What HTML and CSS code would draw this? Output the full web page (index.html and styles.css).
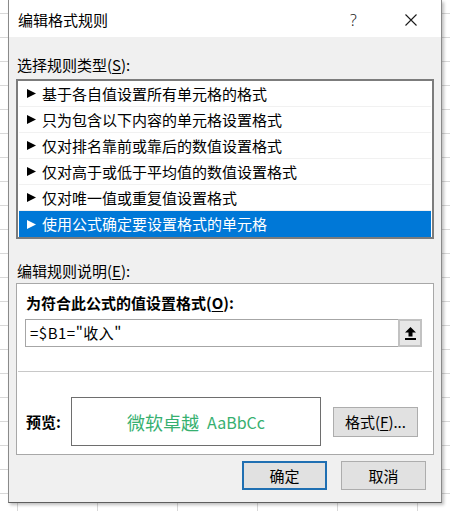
FILE: index.html
```html
<!DOCTYPE html>
<html lang="zh-CN">
<head>
<meta charset="utf-8">
<title>编辑格式规则</title>
<link rel="stylesheet" href="styles.css">
</head>
<body>
<div class="dialog">
  <div class="titlebar">
    <span class="title">编辑格式规则</span>
    <span class="help">?</span>
    <span class="close">
      <svg width="12" height="12" viewBox="0 0 12 12"><path d="M0.5 0.5 L11.5 11.5 M11.5 0.5 L0.5 11.5" stroke="#1a1a1a" stroke-width="1.1" fill="none"/></svg>
    </span>
  </div>
  <div class="body">
    <div class="label">选择规则类型(<u>S</u>):</div>
    <ul class="list">
      <li class="row"><svg class="tri" width="9" height="9" viewBox="0 0 9 9"><polygon points="0,0 9,4.5 0,9" fill="currentColor"/></svg><span>基于各自值设置所有单元格的格式</span></li>
      <li class="row"><svg class="tri" width="9" height="9" viewBox="0 0 9 9"><polygon points="0,0 9,4.5 0,9" fill="currentColor"/></svg><span>只为包含以下内容的单元格设置格式</span></li>
      <li class="row"><svg class="tri" width="9" height="9" viewBox="0 0 9 9"><polygon points="0,0 9,4.5 0,9" fill="currentColor"/></svg><span>仅对排名靠前或靠后的数值设置格式</span></li>
      <li class="row"><svg class="tri" width="9" height="9" viewBox="0 0 9 9"><polygon points="0,0 9,4.5 0,9" fill="currentColor"/></svg><span>仅对高于或低于平均值的数值设置格式</span></li>
      <li class="row"><svg class="tri" width="9" height="9" viewBox="0 0 9 9"><polygon points="0,0 9,4.5 0,9" fill="currentColor"/></svg><span>仅对唯一值或重复值设置格式</span></li>
      <li class="row selected"><svg class="tri" width="9" height="9" viewBox="0 0 9 9"><polygon points="0,0 9,4.5 0,9" fill="currentColor"/></svg><span>使用公式确定要设置格式的单元格</span></li>
    </ul>
    <div class="label label2">编辑规则说明(<u>E</u>):</div>
    <div class="panel">
      <div class="bold-label">为符合此公式的值设置格式(<u>O</u>):</div>
      <div class="input">
        <span class="formula">=$B1="收入"</span>
        <span class="collapse">
          <svg width="11" height="13" viewBox="0 0 11 13"><path d="M5.5 0 L11 5.5 L7.5 5.5 L7.5 9.5 L3.5 9.5 L3.5 5.5 L0 5.5 Z" fill="#000"/><rect x="0" y="11" width="11" height="2" fill="#000"/></svg>
        </span>
      </div>
      <div class="sep"></div>
      <div class="preview-row">
        <span class="bold-label preview-label">预览:</span>
        <div class="preview"><span class="zh">微软卓越</span><span class="en">AaBbCc</span></div>
        <span class="btn fmt">格式(<u>F</u>)...</span>
      </div>
    </div>
    <div class="buttons">
      <span class="btn ok">确定</span>
      <span class="btn">取消</span>
    </div>
  </div>
</div>
</body>
</html>
```
FILE: styles.css
```css
html, body {
  margin: 0;
  padding: 0;
}
body {
  width: 450px;
  height: 511px;
  overflow: hidden;
  background-color: #fff;
  background-image:
    linear-gradient(#d8d8d8 1px, transparent 1px),
    linear-gradient(90deg, #d8d8d8 1px, transparent 1px);
  background-size: 100% 24px, 80px 100%;
  background-position: 0 13px, 17px 0;
  font-family: "Noto Sans CJK SC", "Noto Sans", sans-serif;
  font-size: 15px;
  color: #000;
}
.dialog {
  margin-left: 8px;
  width: 434px;
  height: 503px;
  box-sizing: border-box;
  border: 1px solid #8a8a8a;
  border-top: none;
  border-bottom-color: #5e5e5e;
  background: #f0f0f0;
  display: flex;
  flex-direction: column;
  box-shadow: 2px 2px 3px rgba(0, 0, 0, 0.25);
}
.titlebar {
  height: 37px;
  box-sizing: border-box;
  padding: 2px 18px 0 9px;
  background: #fff;
  display: flex;
  align-items: center;
}
.title {
  line-height: 20px;
}
.help {
  margin-left: auto;
  width: 21px;
  text-align: center;
  font-family: "Noto Sans", sans-serif;
  font-weight: 300;
  font-size: 16px;
  line-height: 20px;
  color: #222;
}
.close {
  margin-left: 35px;
  width: 24px;
  height: 20px;
  display: flex;
  align-items: center;
  justify-content: center;
}
.body {
  padding: 18px 7px 0 7px;
  display: flex;
  flex-direction: column;
}
.label {
  padding-left: 1px;
  height: 20px;
  line-height: 20px;
  margin-bottom: 4px;
}
.label2 {
  margin-top: 22px;
  margin-bottom: 2px;
}
u {
  text-decoration-thickness: 1px;
  text-underline-offset: 2px;
}
.list {
  list-style: none;
  margin: 0;
  padding: 0 1px;
  height: 160px;
  box-sizing: border-box;
  border: 2px solid #7c7c7c;
  background: #fff;
}
.row {
  height: 26px;
  box-sizing: border-box;
  border-bottom: 1px solid #f1f1f1;
  display: flex;
  align-items: center;
  padding-left: 8px;
  gap: 6px;
  line-height: 20px;
}
.row:last-child {
  border-bottom: none;
}
.tri {
  flex: none;
  color: #000;
}
.selected {
  background: #0078d7;
  color: #fff;
}
.selected .tri {
  color: #fff;
}
.panel {
  height: 172px;
  box-sizing: border-box;
  border: 1px solid #a8a8a8;
  background: #fff;
  padding: 9px 11px 0 8px;
  display: flex;
  flex-direction: column;
}
.bold-label {
  font-weight: 700;
  padding-left: 1px;
  height: 20px;
  line-height: 20px;
}
.input {
  margin-top: 6px;
  width: 397px;
  height: 28px;
  box-sizing: border-box;
  border: 1px solid #a6a6a6;
  display: flex;
  align-items: stretch;
}
.formula {
  flex: 1;
  padding-left: 4px;
  line-height: 26px;
  letter-spacing: 0.5px;
}
.collapse {
  width: 24px;
  box-sizing: border-box;
  border: 2px solid #c2c2c2;
  margin: -1px -1px -1px 0;
  background: #e6e6e6;
  display: flex;
  align-items: center;
  justify-content: center;
}
.sep {
  margin: 24px -10px 0 -7px;
  height: 1px;
  background: #c8c8c8;
}
.preview-row {
  margin-top: 25px;
  height: 49px;
  display: flex;
  align-items: center;
}
.preview-label {
  width: 46px;
  box-sizing: border-box;
}
.preview {
  width: 250px;
  height: 49px;
  box-sizing: border-box;
  border: 1px solid #6e6e6e;
  display: flex;
  align-items: center;
  justify-content: center;
  gap: 8px;
  color: #36b070;
}
.zh {
  font-size: 18px;
  line-height: 24px;
}
.en {
  font-size: 16px;
  line-height: 24px;
}
.btn {
  width: 85px;
  height: 29px;
  box-sizing: border-box;
  border: 1px solid #adadad;
  background: #e1e1e1;
  display: flex;
  align-items: center;
  justify-content: center;
  line-height: 20px;
}
.fmt {
  margin-left: 12px;
  height: 30px;
}
.buttons {
  margin-top: 6px;
  padding-right: 8px;
  display: flex;
  justify-content: flex-end;
  gap: 14px;
}
.ok {
  border: 2px solid #1f6fb2;
}
```
